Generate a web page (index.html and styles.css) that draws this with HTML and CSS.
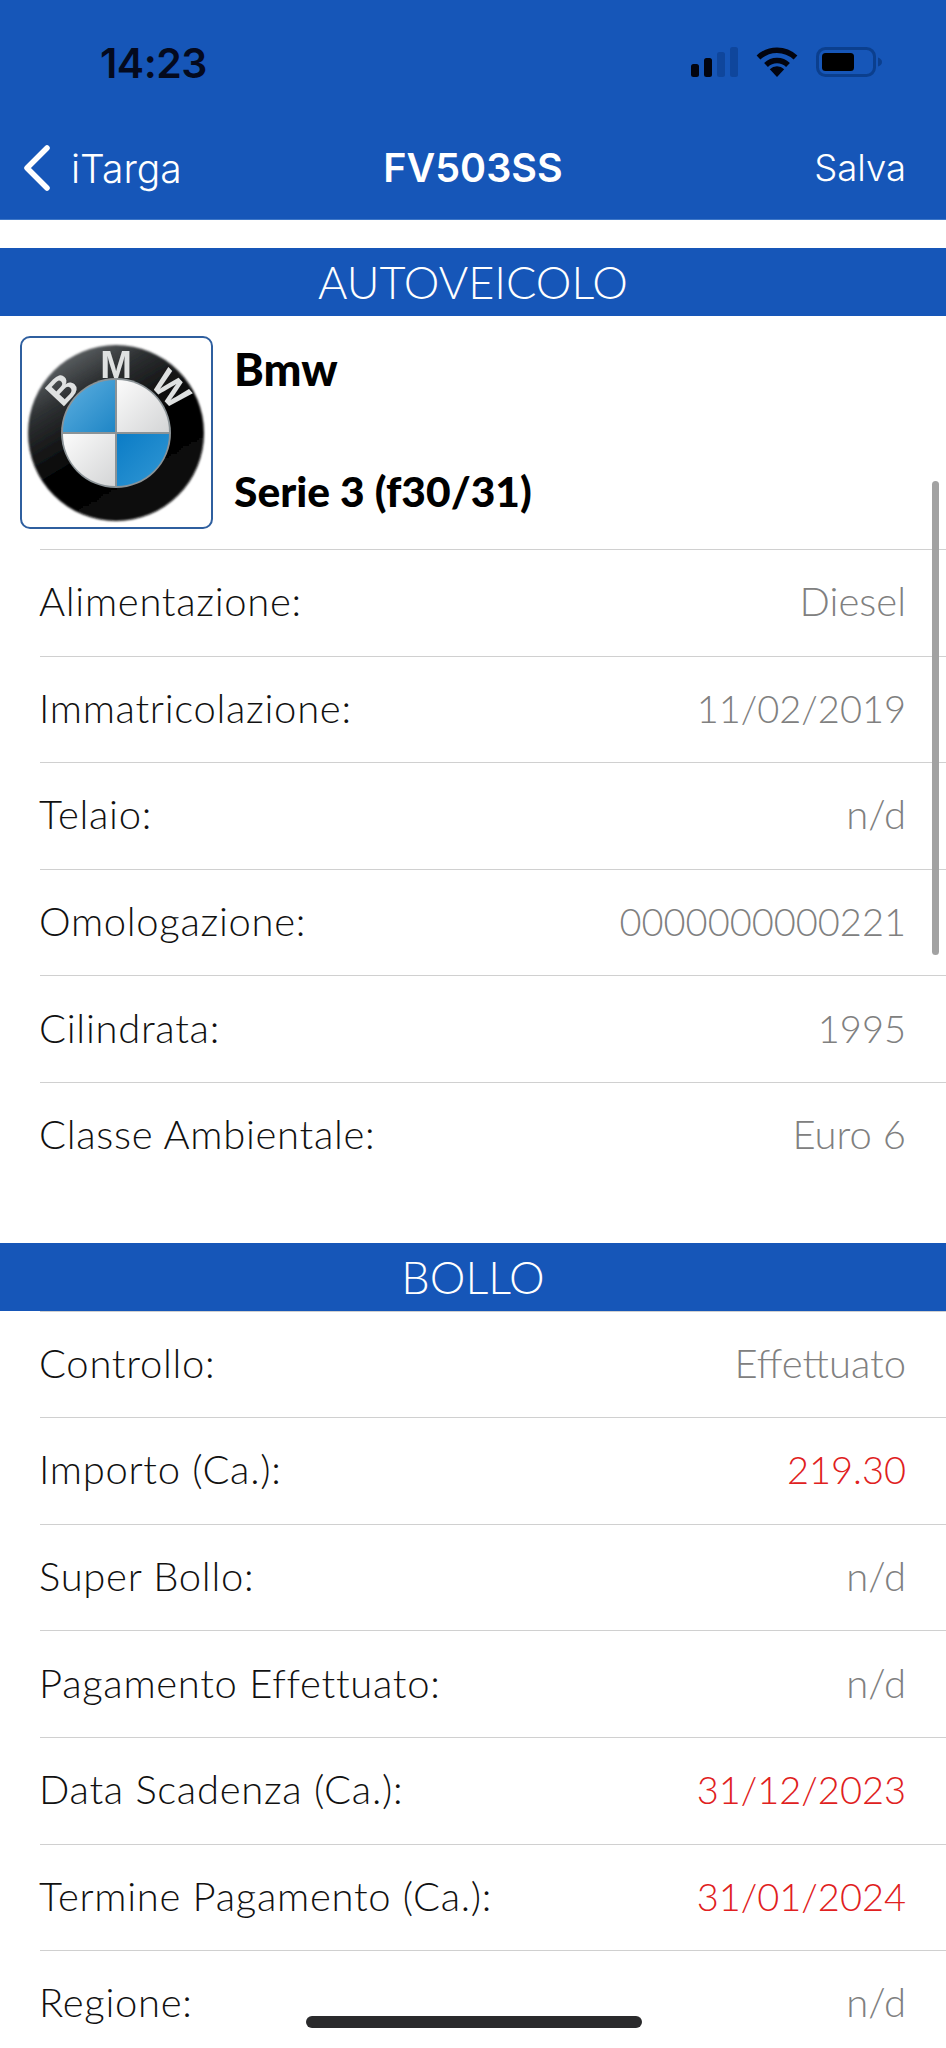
FILE: index.html
```html
<!DOCTYPE html>
<html>
<head>
  <meta charset="utf-8">
  <title>iTarga - FV503SS</title>
  <link rel="stylesheet" href="styles.css">
</head>
<body>
  <div class="phone">
    <!-- Barra di stato e navigazione -->
    <div class="header">
      <div class="statusbar">
        <span class="clock">14:23</span>
        <div class="status-icons">
          <svg class="icon-signal" width="48" height="30" viewBox="0 0 48 30">
            <rect x="1" y="17" width="8" height="13" rx="2.5" fill="#02040f"/>
            <rect x="14" y="11" width="8" height="19" rx="2.5" fill="#02040f"/>
            <rect x="27" y="5" width="8" height="25" rx="2.5" fill="#0f469c"/>
            <rect x="40" y="0" width="8" height="30" rx="2.5" fill="#0f469c"/>
          </svg>
          <svg class="icon-wifi" width="42" height="30" viewBox="0 0 42 30">
            <path d="M2.5 10.5a27 27 0 0 1 37 0" fill="none" stroke="#02040f" stroke-width="5.5"/>
            <path d="M10 18a16 16 0 0 1 22 0" fill="none" stroke="#02040f" stroke-width="5.5"/>
            <path d="M21 30l-7.2-7.8a10.5 10.5 0 0 1 14.4 0z" fill="#02040f"/>
          </svg>
          <svg class="icon-battery" width="66" height="30" viewBox="0 0 66 30">
            <rect x="1.5" y="1.5" width="57" height="27" rx="8" fill="none" stroke="#0b3f8e" stroke-width="3"/>
            <rect x="6" y="6" width="32" height="18" rx="3.5" fill="#000"/>
            <path d="M62 10.5c2.5 1 4 2.500 4 4.500s-1.500 3.500-4 4.500z" fill="#0b3f8e"/>
          </svg>
        </div>
      </div>
      <div class="navbar">
        <a class="back">
          <svg width="30" height="46" viewBox="0 0 30 46">
            <path d="M25 3L5 23l20 20" fill="none" stroke="#fff" stroke-width="5.500" stroke-linecap="round" stroke-linejoin="round"/>
          </svg>
          <span>iTarga</span>
        </a>
        <span class="nav-title">FV503SS</span>
        <a class="save">Salva</a>
      </div>
    </div>

    <div class="section-title first">AUTOVEICOLO</div>

    <div class="vehicle">
      <div class="logo-box">
        <svg class="bmw" width="184" height="184" viewBox="0 0 184 184">
          <defs>
            <linearGradient id="ring" x1="0.15" y1="0" x2="0.75" y2="1">
              <stop offset="0" stop-color="#6f7477"/>
              <stop offset="0.25" stop-color="#2e3133"/>
              <stop offset="0.55" stop-color="#040404"/>
              <stop offset="1" stop-color="#0a0a0a"/>
            </linearGradient>
            <linearGradient id="blue1" x1="0" y1="0" x2="1" y2="1">
              <stop offset="0" stop-color="#5fb0e0"/>
              <stop offset="1" stop-color="#1f86c6"/>
            </linearGradient>
            <linearGradient id="blue2" x1="0" y1="0" x2="1" y2="1">
              <stop offset="0" stop-color="#0b7cc6"/>
              <stop offset="1" stop-color="#3298d4"/>
            </linearGradient>
            <linearGradient id="white1" x1="0" y1="0" x2="1" y2="1">
              <stop offset="0" stop-color="#fbfbfb"/>
              <stop offset="1" stop-color="#d4d5d6"/>
            </linearGradient>
            <filter id="soft" x="-5%" y="-5%" width="110%" height="110%">
              <feGaussianBlur stdDeviation="1.2"/>
            </filter>
            <filter id="soft-text" x="-10%" y="-10%" width="120%" height="120%">
              <feGaussianBlur stdDeviation="0.5"/>
            </filter>
          </defs>
          <circle cx="91" cy="92" r="88" fill="url(#ring)" filter="url(#soft)"/>
          <circle cx="91" cy="92" r="55" fill="#8b9397"/>
          <path d="M90 91V39A52 52 0 0 0 38 91z" fill="url(#blue1)"/>
          <path d="M92 91V39A52 52 0 0 1 144 91z" fill="url(#white1)"/>
          <path d="M90 93V145A52 52 0 0 1 38 93z" fill="url(#white1)"/>
          <path d="M92 93V145A52 52 0 0 0 144 93z" fill="url(#blue2)"/>
          <g class="bmw-letters" filter="url(#soft-text)">
            <text x="91" y="37" text-anchor="middle">M</text>
            <text transform="translate(37 48) rotate(-47)" text-anchor="middle" y="13">B</text>
            <text transform="translate(146 48) rotate(47)" text-anchor="middle" y="13">W</text>
          </g>
        </svg>
      </div>
      <div class="vehicle-names">
        <span class="make">Bmw</span>
        <span class="model">Serie 3 (f30/31)</span>
      </div>
    </div>

    <div class="rows">
      <div class="row"><span>Alimentazione:</span><span class="val">Diesel</span></div>
      <div class="row"><span>Immatricolazione:</span><span class="val num">11/02/2019</span></div>
      <div class="row"><span>Telaio:</span><span class="val">n/d</span></div>
      <div class="row"><span>Omologazione:</span><span class="val num">0000000000221</span></div>
      <div class="row"><span>Cilindrata:</span><span class="val num">1995</span></div>
      <div class="row"><span>Classe Ambientale:</span><span class="val">Euro 6</span></div>
    </div>

    <div class="section-title second">BOLLO</div>

    <div class="rows">
      <div class="row"><span>Controllo:</span><span class="val">Effettuato</span></div>
      <div class="row"><span>Importo (Ca.):</span><span class="val num red">219.30</span></div>
      <div class="row"><span>Super Bollo:</span><span class="val">n/d</span></div>
      <div class="row"><span>Pagamento Effettuato:</span><span class="val">n/d</span></div>
      <div class="row"><span>Data Scadenza (Ca.):</span><span class="val num red">31/12/2023</span></div>
      <div class="row"><span>Termine Pagamento (Ca.):</span><span class="val num red">31/01/2024</span></div>
      <div class="row"><span>Regione:</span><span class="val">n/d</span></div>
    </div>

    <div class="scrollbar"></div>
    <div class="home-indicator"></div>
  </div>
</body>
</html>
```

FILE: styles.css
```css
html, body {
  margin: 0;
  padding: 0;
  background-color: #fff;
}
.phone {
  position: relative;
  width: 946px;
  height: 2048px;
  overflow: hidden;
  background-color: #fff;
  font-family: Lato, "Open Sans", sans-serif;
  color: #111;
}

/* Testata */
.header {
  height: 220px;
  background-color: #1656b8;
  border-bottom: 1px solid #3f78c8;
  box-sizing: border-box;
}
.statusbar {
  height: 125px;
  display: flex;
  justify-content: space-between;
  align-items: flex-start;
  padding: 42px 64px 0 100px;
  box-sizing: border-box;
}
.clock {
  font-family: Inter, sans-serif;
  font-size: 41px;
  font-weight: 600;
  line-height: 42px;
  color: #040a1e;
  letter-spacing: -0.5px;
}
.status-icons {
  display: flex;
  align-items: center;
  gap: 18px;
  padding-top: 5px;
}
.navbar {
  display: flex;
  align-items: center;
  justify-content: space-between;
  height: 86px;
  padding: 0 40px 0 22px;
  color: #fff;
  font-family: Inter, sans-serif;
  font-size: 36.5px;
  position: relative;
}
.back {
  display: flex;
  align-items: center;
  gap: 19px;
  font-weight: 300;
  font-size: 39px;
}
.save {
  font-weight: 300;
}
.nav-title {
  position: absolute;
  left: 0;
  right: 0;
  text-align: center;
  font-weight: 600;
  font-size: 39.5px;
}

/* Fasce di sezione */
.section-title {
  height: 68px;
  line-height: 68px;
  text-align: center;
  background-color: #1656b8;
  color: #fff;
  font-size: 45px;
  font-weight: 300;
}
.section-title.first {
  margin-top: 28px;
}
.section-title.second {
  margin-top: 54px;
}

/* Veicolo */
.vehicle {
  display: flex;
  height: 233px;
  padding: 20px 0 0 20px;
  box-sizing: border-box;
}
.logo-box {
  width: 193px;
  height: 193px;
  border: 2px solid #2f5f9f;
  border-radius: 10px;
  box-sizing: border-box;
  display: flex;
  align-items: center;
  justify-content: center;
}
.bmw-letters {
  font-family: "Liberation Sans", sans-serif;
  font-size: 38px;
  font-weight: 700;
  fill: #dfe1e1;
}
.vehicle-names {
  display: flex;
  flex-direction: column;
  justify-content: space-between;
  margin-left: 21px;
  height: 193px;
  padding: 9px 0 14px;
  box-sizing: border-box;
  font-weight: 900;
  line-height: 48px;
  color: #000;
}
.make {
  font-size: 45px;
}
.model {
  font-size: 42.5px;
}

/* Righe */
.rows {
  margin-left: 40px;
}
.row {
  display: flex;
  justify-content: space-between;
  align-items: center;
  height: 106.6px;
  box-sizing: border-box;
  padding: 0 40px 3px 0;
  border-top: 1px solid #d0d0d0;
  font-size: 40px;
  letter-spacing: 0.7px;
  font-weight: 300;
}
.row span:first-child {
  margin-left: -1px;
}
.val {
  color: #808080;
  font-size: 40px;
  letter-spacing: 0;
}
.val.num {
  font-size: 38px;
}
.val.red {
  color: #e02020;
}

/* Elementi sovrapposti */
.scrollbar {
  position: absolute;
  left: 932px;
  top: 481px;
  width: 7px;
  height: 474px;
  border-radius: 4px;
  background-color: #a2a2a2;
}
.home-indicator {
  position: absolute;
  left: 306px;
  top: 2016px;
  width: 336px;
  height: 12px;
  border-radius: 6px;
  background-color: #2a2a2c;
}
```
